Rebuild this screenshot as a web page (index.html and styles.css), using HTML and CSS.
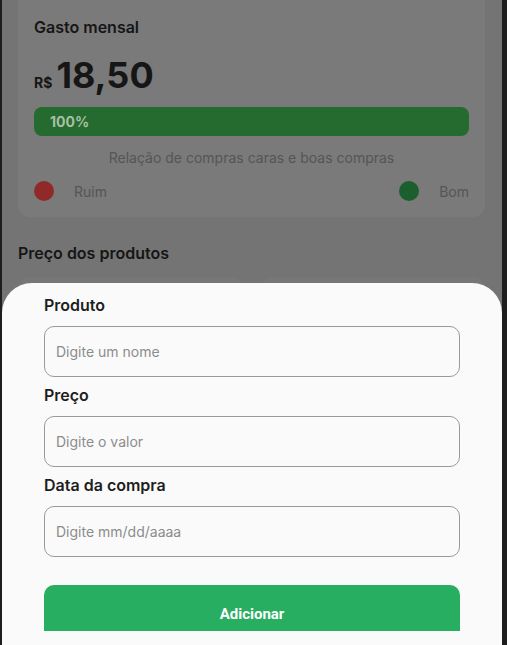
FILE: index.html
```html
<!DOCTYPE html>
<html lang="pt">
<head>
<meta charset="utf-8">
<title>Gasto mensal</title>
<link rel="stylesheet" href="styles.css">
</head>
<body>
<div class="app">
  <section class="card">
    <h2 class="card-title">Gasto mensal</h2>
    <div class="amount"><span class="currency">R$</span><span class="value">18,50</span></div>
    <div class="bar"><span class="bar-label">100%</span></div>
    <p class="caption">Relação de compras caras e boas compras</p>
    <div class="legend">
      <div class="legend-item"><span class="dot dot-bad"></span><span>Ruim</span></div>
      <div class="legend-item"><span class="dot dot-good"></span><span>Bom</span></div>
    </div>
  </section>
  <h2 class="section-title">Preço dos produtos</h2>
  <div class="products">
    <div class="product"></div>
    <div class="product"></div>
  </div>

  <div class="sheet">
    <form class="sheet-body">
      <label class="field-label" for="produto">Produto</label>
      <input class="field" id="produto" type="text" placeholder="Digite um nome">
      <label class="field-label" for="preco">Preço</label>
      <input class="field" id="preco" type="text" placeholder="Digite o valor">
      <label class="field-label" for="data">Data da compra</label>
      <input class="field" id="data" type="text" placeholder="Digite mm/dd/aaaa">
      <button class="submit" type="button">Adicionar</button>
    </form>
  </div>
</div>
</body>
</html>
```
FILE: styles.css
```css
html, body {
  margin: 0;
  padding: 0;
  background: #1e1e1e;
}
body {
  font-family: Inter, "Noto Sans", sans-serif;
}
.app {
  position: relative;
  width: 500px;
  height: 645px;
  margin-left: 2px;
  background: #747474;
  overflow: hidden;
}
.card {
  margin: -12px 17px 0 16px;
  padding: 28px 16px 16px 16px;
  background: #7a7a7a;
  border-radius: 12px;
}
.card-title {
  margin: 0;
  font-size: 16px;
  line-height: 22px;
  font-weight: 600;
  color: #161616;
}
.amount {
  display: flex;
  align-items: baseline;
  gap: 4px;
  margin-top: 17px;
  color: #161616;
  font-weight: 700;
}
.currency {
  font-size: 14px;
}
.value {
  font-size: 36px;
  line-height: 40px;
}
.bar {
  margin-top: 12px;
  height: 29px;
  border-radius: 8px;
  background: #256a2e;
  display: flex;
  align-items: center;
  padding-left: 16px;
}
.bar-label {
  font-size: 14px;
  font-weight: 700;
  color: #a6c1a3;
}
.caption {
  margin: 12px 0 0 0;
  text-align: center;
  font-size: 14px;
  line-height: 20px;
  color: #555555;
}
.legend {
  display: flex;
  justify-content: space-between;
  margin-top: 13px;
}
.legend-item {
  display: flex;
  align-items: center;
  gap: 20px;
  font-size: 14px;
  color: #555555;
}
.dot {
  width: 20px;
  height: 20px;
  border-radius: 50%;
}
.dot-bad { background: #8f2a28; }
.dot-good { background: #1b5f2f; }
.section-title {
  margin: 25px 0 0 16px;
  font-size: 16px;
  line-height: 22px;
  font-weight: 600;
  color: #161616;
}
.products {
  display: grid;
  grid-template-columns: 1fr 1fr;
  gap: 18px;
  margin: 13px 17px 0 16px;
}
.product {
  height: 120px;
  background: #777777;
  border-radius: 12px;
}
.sheet {
  position: absolute;
  left: 0;
  right: 0;
  top: 283px;
  bottom: 0;
  background: #fafafa;
  border-radius: 30px 30px 0 0;
}
.sheet-body {
  height: 348px;
  overflow: hidden;
  padding: 0 42px;
  display: flex;
  flex-direction: column;
}
.field-label {
  flex: none;
  margin: 7px 0 10px 0;
  font-size: 16px;
  line-height: 22px;
  font-weight: 600;
  color: #1e1e1e;
}
.field-label:first-child {
  margin-top: 11px;
}
.field {
  flex: none;
  box-sizing: border-box;
  height: 51px;
  width: 100%;
  border: 1px solid #9a9a9a;
  border-radius: 10px;
  background: #fafafa;
  padding: 0 11px;
  font-family: Inter, "Noto Sans", sans-serif;
  font-size: 14px;
  color: #333;
  outline: none;
}
.field::placeholder {
  color: #8c8c8c;
}
.submit {
  flex: none;
  margin-top: 28px;
  height: 58px;
  border: none;
  border-radius: 10px;
  background: #27ae60;
  color: #ffffff;
  font-family: Roboto, "Liberation Sans", sans-serif;
  font-weight: 700;
  font-size: 15px;
  padding: 0;
}
```
